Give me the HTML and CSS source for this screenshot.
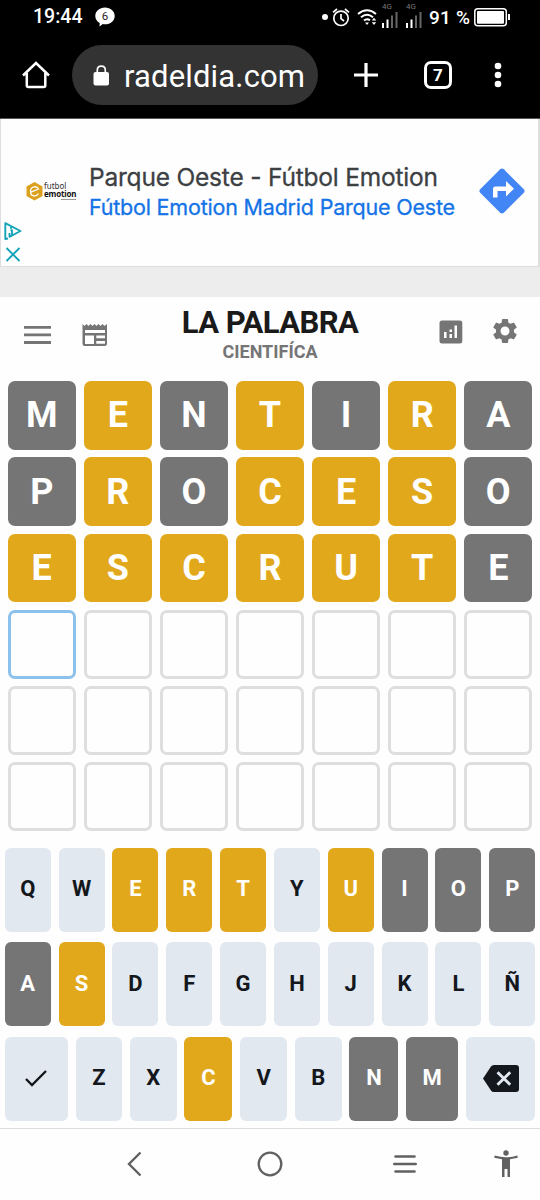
FILE: index.html
```html
<!DOCTYPE html>
<html lang="es">
<head>
<meta charset="utf-8">
<title>La palabra científica</title>
<link rel="stylesheet" href="styles.css">
</head>
<body>
<div class="phone">
  <header class="chrome">
    <div class="status">
      <span class="clock">19:44</span>
      <span class="bubble"><svg width="20" height="20" viewBox="0 0 20 20"><path d="M10 .5c5.500 0 9.700 3.600 9.700 8.400s-4.200 8.400-9.700 8.400c-.8 0-1.500 0-2.200-.2L4.500 19.500l.2-3.600C2 14.400.3 11.900.3 8.900.3 4.100 4.500.5 10 .5z" fill="#fff"/></svg><b>6</b></span>
      <span class="dot"></span>
      <svg class="alarm" width="18" height="19" viewBox="0 0 18 19" fill="none" stroke="#fff"><circle cx="9" cy="10.300" r="7.200" stroke-width="1.700"/><path d="M9 6v4.700l3 2.300M1 4.300L5 1M17 4.300L13 1" stroke-width="1.700"/></svg>
      <svg class="wifi" width="20" height="18" viewBox="0 0 20 18" fill="none" stroke="#fff" stroke-width="2"><path d="M1 6Q10-1.500 19 6M4 9.300Q10 4.200 16 9.300M7 12.500Q10 10 13 12.300"/><path d="M8 14.500h4l-2 2.500zM14.800 12.500l2.200-2.700 2.200 2.700zM14.800 14.200h4.400L17 17z" fill="#fff" stroke="none"/></svg>
      <span class="signal"><small>4G</small><svg width="17" height="17" viewBox="0 0 17 17"><path d="M1 12h2v5H1zM5.500 8.500h2V17h-2z" fill="#fff"/><path d="M10 4.500h2V17h-2zM14.500 1h2v16h-2z" fill="#666"/></svg></span>
      <span class="signal"><small>4G</small><svg width="17" height="17" viewBox="0 0 17 17"><path d="M1 12h2v5H1zM5.500 8.500h2V17h-2z" fill="#fff"/><path d="M10 4.500h2V17h-2zM14.500 1h2v16h-2z" fill="#666"/></svg></span>
      <span class="percent">91 %</span>
      <svg class="battery" width="36" height="19" viewBox="0 0 36 19"><rect x=".8" y=".8" width="31.500" height="17" rx="3" fill="none" stroke="#fff" stroke-width="1.500"/><rect x="3" y="3" width="27" height="12.700" rx="1" fill="#fff"/><path d="M34 6h2v6h-2z" fill="#fff"/></svg>
    </div>
    <div class="toolbar">
      <svg class="home" width="28" height="28" viewBox="0 0 28 28" fill="none" stroke="#fff" stroke-width="2.500"><path d="M1 14.500L14 2l13 12.500M4.800 12v12.500q0 1.500 1.500 1.500h15.500q1.500 0 1.500-1.500V12"/></svg>
      <div class="url">
        <svg width="17" height="21" viewBox="0 0 17 21"><rect x=".5" y="7" width="15.500" height="13.500" rx="2" fill="#fff"/><path d="M4.300 8V5.200q0-4 4-4t4 4V8" fill="none" stroke="#fff" stroke-width="1.700"/></svg>
        <span>radeldia.com</span>
      </div>
      <svg class="plus" width="24" height="24" viewBox="0 0 24 24"><path d="M12 0v24M0 12h24" stroke="#fff" stroke-width="3.200"/></svg>
      <span class="tabs">7</span>
      <svg class="more" width="8" height="26" viewBox="0 0 8 26" fill="#fff"><circle cx="4" cy="4" r="3.300"/><circle cx="4" cy="13" r="3.300"/><circle cx="4" cy="22" r="3.300"/></svg>
    </div>
  </header>

  <section class="ad">
    <div class="adside">
      <div class="brand">
        <svg width="17" height="19" viewBox="0 0 17 19"><path d="M8.500 0L16.500 4.500v9.500L8.500 18.500.5 14V4.500z" fill="#dba01e"/><path d="M5 10.200l7.500-3.200C11 3.500 4.500 4 4.500 9.500s6 5.500 8 2" fill="none" stroke="#fff" stroke-width="1.300"/></svg>
        <div class="brandname"><span>futbol</span><b>emotion</b><i></i></div>
      </div>
      <div class="adchoices">
        <svg width="18" height="18" viewBox="0 0 18 18" fill="none" stroke="#16a5b8" stroke-width="1.900" stroke-linejoin="round"><path d="M4 16.500L1.300 17V1.200L16.500 9 5.500 14.800V11"/><path d="M6.500 8.200H8V13M7 5v1.700"/></svg>
        <svg width="18" height="15" viewBox="0 0 18 15" fill="none" stroke="#16a5b8" stroke-width="1.900"><path d="M2.500 1l13 13M15.500 1l-13 13"/></svg>
      </div>
    </div>
    <div class="adtext"><span class="adtitle">Parque Oeste - Fútbol Emotion</span><span class="adsub">Fútbol Emotion Madrid Parque Oeste</span></div>
    <svg class="direction" width="46" height="46" viewBox="0 0 46 46"><path d="M21.200 1.200q1.800-1.600 3.600 0l20 20q1.600 1.800 0 3.600l-20 20q-1.800 1.600-3.600 0l-20-20q-1.600-1.800 0-3.600z" fill="#4285f4"/><path d="M14 29.500V21q0-2.500 2.500-2.500H27V13l8 7.800-8 7.700V23h-8.500v6.500z" fill="#fff"/></svg>
  </section>

  <main class="game">
    <div class="head">
      <svg class="menu" width="28" height="20" viewBox="0 0 28 20"><path d="M0 2.300h27M0 9.900h27M0 17.500h27" stroke="#757575" stroke-width="2.800"/></svg>
      <svg class="news" width="26" height="24" viewBox="0 0 26 24"><path d="M.5 1l2 2 2-2 2 2 2-2 2 2 2-2 2 2 2-2 2 2 2-2 2 2 2.500-2v19.500q0 2.500-2.500 2.500h-20Q.5 23 .5 20.500z" fill="#757575"/><path d="M3 7h20v3H3zM3 12.500h9V21H3zM14.300 12.500H23v2.700h-8.700zM14.300 18H23v2.700h-8.700z" fill="#fff"/></svg>
      <div class="titles"><h1>LA PALABRA</h1><h2>CIENTIFÍCA</h2></div>
      <svg class="stats" width="24" height="24" viewBox="0 0 24 24"><rect x=".5" y=".5" width="22.800" height="23" rx="2.500" fill="#757575"/><path d="M5 12h2.500v6H5zM10.500 9.500H13V12h-2.500zM10.500 14H13v4h-2.500zM15.500 5.500H18V18h-2.500z" fill="#fff"/></svg>
      <svg class="gear" width="30" height="30" viewBox="0 0 24 24"><path fill="#757575" d="M19.140 12.940c.04-.3.060-.61.060-.94 0-.32-.02-.64-.07-.94l2.030-1.580c.18-.14.230-.41.120-.61l-1.920-3.320c-.12-.22-.37-.29-.59-.22l-2.390.96c-.5-.38-1.030-.7-1.620-.94l-.36-2.540c-.04-.24-.24-.41-.48-.41h-3.840c-.24 0-.43.170-.47.410l-.36 2.540c-.59.240-1.130.57-1.620.94l-2.390-.96c-.22-.08-.47 0-.59.220L2.740 8.870c-.12.210-.08.470.120.610l2.030 1.580c-.05.300-.09.630-.09.940s.02.640.070.940l-2.030 1.580c-.18.140-.23.410-.12.610l1.920 3.320c.12.220.37.290.59.220l2.390-.96c.5.380 1.030.7 1.620.94l.36 2.540c.05.240.24.410.48.410h3.840c.24 0 .44-.17.470-.41l.36-2.540c.59-.24 1.130-.56 1.620-.94l2.390.96c.22.080.47 0 .59-.22l1.920-3.320c.12-.22.070-.47-.12-.61l-2.010-1.580zM12 15.600A3.600 3.600 0 1 1 12 8.400a3.600 3.600 0 0 1 0 7.200z"/></svg>
    </div>
    <div class="board">
      <b class="tile gray">M</b><b class="tile gold">E</b><b class="tile gray">N</b><b class="tile gold">T</b><b class="tile gray">I</b><b class="tile gold">R</b><b class="tile gray">A</b>
      <b class="tile gray">P</b><b class="tile gold">R</b><b class="tile gray">O</b><b class="tile gold">C</b><b class="tile gold">E</b><b class="tile gold">S</b><b class="tile gray">O</b>
      <b class="tile gold">E</b><b class="tile gold">S</b><b class="tile gold">C</b><b class="tile gold">R</b><b class="tile gold">U</b><b class="tile gold">T</b><b class="tile gray">E</b>
      <b class="tile active"></b><b class="tile"></b><b class="tile"></b><b class="tile"></b><b class="tile"></b><b class="tile"></b><b class="tile"></b>
      <b class="tile"></b><b class="tile"></b><b class="tile"></b><b class="tile"></b><b class="tile"></b><b class="tile"></b><b class="tile"></b>
      <b class="tile"></b><b class="tile"></b><b class="tile"></b><b class="tile"></b><b class="tile"></b><b class="tile"></b><b class="tile"></b>
    </div>
    <div class="keyboard">
      <div class="keys"><b class="key">Q</b><b class="key">W</b><b class="key gold">E</b><b class="key gold">R</b><b class="key gold">T</b><b class="key">Y</b><b class="key gold">U</b><b class="key gray">I</b><b class="key gray">O</b><b class="key gray">P</b></div>
      <div class="keys"><b class="key gray">A</b><b class="key gold">S</b><b class="key">D</b><b class="key">F</b><b class="key">G</b><b class="key">H</b><b class="key">J</b><b class="key">K</b><b class="key">L</b><b class="key">Ñ</b></div>
      <div class="keys last"><b class="key"><svg width="22" height="18" viewBox="0 0 22 18"><path d="M1 10l6 6L21 2" fill="none" stroke="#14171c" stroke-width="2.400"/></svg></b><b class="key">Z</b><b class="key">X</b><b class="key gold">C</b><b class="key">V</b><b class="key">B</b><b class="key gray">N</b><b class="key gray">M</b><b class="key"><svg width="36" height="27" viewBox="0 0 36 27"><path d="M0 13.500L8 1.500Q9 0 11 0h22q3 0 3 3v21q0 3-3 3H11q-2 0-3-1.500z" fill="#14171c"/><path d="M14.500 7.200l12.700 12.600M27.200 7.200L14.500 19.800" stroke="#e1e8f0" stroke-width="2.900"/></svg></b></div>
    </div>
  </main>

  <nav class="nav">
    <svg class="back" width="15" height="26" viewBox="0 0 15 26"><path d="M13.500 1.500L2 13l11.500 11.500" fill="none" stroke="#616161" stroke-width="2.400"/></svg>
    <svg class="circle" width="26" height="26" viewBox="0 0 26 26"><circle cx="13" cy="13" r="11.300" fill="none" stroke="#616161" stroke-width="2.300"/></svg>
    <svg class="recent" width="24" height="20" viewBox="0 0 24 20"><path d="M2.500 2.500h19M1.300 10h21.400M2.500 17.500h19" stroke="#616161" stroke-width="2.600" stroke-linecap="round"/></svg>
    <svg class="person" width="24" height="28" viewBox="0 0 24 28"><circle cx="12" cy="3" r="2.700" fill="#616161"/><path d="M.7 5.500Q12 9 23.300 5.500l.5 2.300L16 9.200V27h-2.500v-8h-3v8H8V9.200L.2 7.800z" fill="#616161"/></svg>
  </nav>
</div>
</body>
</html>
```
FILE: styles.css
```css
* { box-sizing: border-box; }
body { margin: 0; font-family: Roboto, "Liberation Sans", sans-serif; background: #fff; }
svg { display: block; flex: none; }
.phone { width: 540px; height: 1200px; overflow: hidden; display: flex; flex-direction: column; background: #fefefe; }

.chrome { height: 119px; flex: none; background: #000; color: #fff; border-bottom: 1px solid #555; }
.status { height: 34px; display: flex; align-items: center; padding-left: 33px; }
.clock { width: 62px; font-size: 19.500px; font-weight: 500; line-height: 34px; }
.bubble { display: grid; width: 20px; margin-right: 207px; }
.bubble svg, .bubble b { grid-area: 1 / 1; }
.bubble b { text-align: center; font-size: 11.500px; font-weight: 400; line-height: 18px; color: #222; }
.dot { width: 6px; height: 6px; border-radius: 50%; background: #fff; margin-right: 4px; }
.alarm { margin-right: 7px; }
.wifi { margin-right: 4px; }
.signal { width: 17px; height: 26px; margin: -4px 7px 0 0; display: flex; flex-direction: column; }
.signal small { font-size: 8px; line-height: 9px; color: #777; padding-left: 1px; }
.percent { width: 45px; white-space: nowrap; font-size: 19px; font-weight: 500; letter-spacing: .2px; }

.toolbar { height: 82px; display: flex; align-items: center; padding: 0 37px 0 22px; }
.url { width: 246px; height: 60px; margin-left: 22px; border-radius: 30px; background: #333; display: flex; align-items: center; gap: 14px; padding-left: 21px; }
.url span { font-size: 31px; line-height: 40px; letter-spacing: .15px; padding-top: 3px; }
.plus { margin-left: 36px; }
.tabs { width: 28px; height: 28px; margin-left: 46px; border: 3px solid #fff; border-radius: 7px; display: grid; place-items: center; font-size: 17px; font-weight: 700; }
.more { margin-left: 42px; }

.ad { height: 148px; flex: none; display: flex; align-items: center; background: #fefefe; border: 1px solid #dedede; border-top: 0; border-right-width: 2px; padding-bottom: 3px; }
.adside { width: 88px; height: 145px; padding: 63px 0 0 3px; }
.brand { height: 20px; display: flex; padding-left: 22px; gap: 1px; }
.brandname { display: flex; flex-direction: column; font: 8px/8px "Noto Sans", sans-serif; color: #333; }
.brandname b { color: #111; letter-spacing: -.2px; }
.brandname i { width: 15px; height: 1px; background: #999; align-self: flex-end; margin-top: 1px; }
.adchoices { padding-top: 20px; display: flex; flex-direction: column; gap: 7px; }
.adtext { width: 390px; display: flex; flex-direction: column; font-family: Inter, sans-serif; white-space: nowrap; }
.adtitle { font-size: 24.500px; line-height: 32px; color: #3c4043; letter-spacing: -.2px; -webkit-text-stroke: .3px; }
.adsub { font-size: 21.500px; line-height: 28px; color: #1473e6; letter-spacing: -.2px; -webkit-text-stroke: .3px; }

.game { height: 861px; flex: none; border-top: 30px solid #ededed; }
.head { height: 84px; display: flex; align-items: flex-start; padding-left: 24px; }
.menu { margin-top: 28px; }
.news { margin: 26px 0 0 30px; }
.titles { width: 324px; text-align: center; }
.titles h1 { margin: 7px 0 0; font-size: 31px; line-height: 38px; font-weight: 700; letter-spacing: -.6px; color: #1a1a1b; }
.titles h2 { margin: 0; font-size: 18px; line-height: 20px; font-weight: 700; color: #757575; }
.stats { margin: 23px 0 0 7px; }
.gear { margin: 19px 0 0 27px; }

.board { display: grid; grid-template-columns: repeat(7, 1fr); grid-auto-rows: 68.700px; gap: 7.600px 8px; padding: 0 7.700px; }
.tile { border: 3px solid #dedede; border-radius: 7px; display: grid; place-items: center; color: #fff; font-size: 36px; line-height: 1; }
.tile.active { border-color: #8bc1eb; }
.gold, .tile.gold { background: #e2a81c; border-color: #e2a81c; color: #fff; }
.gray, .tile.gray { background: #757575; border-color: #757575; color: #fff; }

.keyboard { display: flex; flex-direction: column; gap: 10.500px; padding: 16.500px 4.700px 0; }
.keys { height: 84px; display: grid; grid-template-columns: repeat(10, 1fr); gap: 7.700px; }
.keys.last { grid-template-columns: 63.500fr 46.300fr 47fr 48fr 47fr 47fr 49fr 52.300fr 69.300fr; }
.key { border-radius: 6px; display: grid; place-items: center; background: #e1e8f0; color: #14171c; font-size: 22px; line-height: 1; padding-bottom: 1px; }
.key.gold { background: #e2a81c; color: #fff; }
.key.gray { background: #757575; color: #fff; }

.nav { height: 72px; flex: none; border-top: 1px solid #dcdcdc; display: flex; align-items: center; padding: 0 0 2px 127px; }
.circle { margin-left: 115px; }
.recent { margin-left: 110px; }
.person { margin-left: 77px; }
```
